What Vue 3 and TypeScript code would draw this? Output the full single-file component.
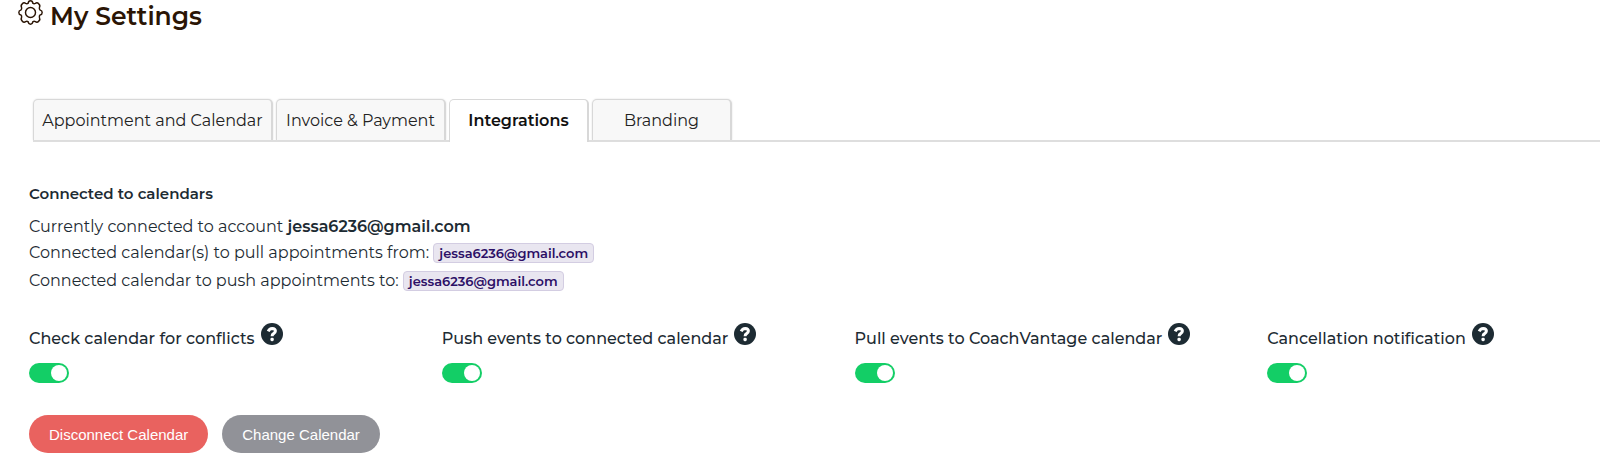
<script setup lang="ts">
import { ref } from 'vue'

interface Tab {
  label: string
  size: 'wide' | 'medium' | 'regular'
}

interface Option {
  id: string
  label: string
  enabled: boolean
}

const tabs: Tab[] = [
  { label: 'Appointment and Calendar', size: 'wide' },
  { label: 'Invoice & Payment', size: 'medium' },
  { label: 'Integrations', size: 'regular' },
  { label: 'Branding', size: 'regular' },
]
const activeTab = ref('Integrations')
const account = 'jessa6236@gmail.com'

const options = ref<Option[]>([
  { id: 'conflicts', label: 'Check calendar for conflicts', enabled: true },
  { id: 'push', label: 'Push events to connected calendar', enabled: true },
  { id: 'pull', label: 'Pull events to CoachVantage calendar', enabled: true },
  { id: 'cancellation', label: 'Cancellation notification', enabled: true },
])
</script>

<template>
  <main class="page">
    <header class="heading">
      <svg class="gear" viewBox="0 0 24 24" aria-hidden="true">
        <path d="M9.8 3.1 Q10 .8 12 .8 T14.2 3.1 Q15.4 3.9 16.7 3.2 Q18.4 2 19.9 3.7 Q21.6 5.2 20.6 7 Q20.1 8.8 21.3 9.7 Q23.2 10 23.2 12 T21.3 14.3 Q20.1 15.2 20.6 17 Q21.6 18.8 19.9 20.3 Q18.4 22 16.7 20.8 Q15.4 20.1 14.2 20.9 Q14 23.2 12 23.2 T9.8 20.9 Q8.6 20.1 7.3 20.8 Q5.6 22 4.1 20.3 Q2.4 18.8 3.4 17 Q3.9 15.2 2.7 14.3 Q.8 14 .8 12 T2.7 9.7 Q3.9 8.8 3.4 7 Q2.4 5.2 4.1 3.7 Q5.6 2 7.3 3.2 Q8.6 3.9 9.8 3.1 Z" />
        <circle cx="12" cy="12" r="4.8" />
      </svg>
      <h1>My Settings</h1>
    </header>

    <div class="tabs" role="tablist">
      <button
        v-for="tab in tabs"
        :key="tab.label"
        type="button"
        role="tab"
        class="tab"
        :class="[tab.size, { active: tab.label === activeTab }]"
        :aria-selected="tab.label === activeTab"
        @click="activeTab = tab.label"
      >{{ tab.label }}</button>
    </div>

    <section class="panel">
      <h2>Connected to calendars</h2>
      <p class="line first">Currently connected to account <strong>{{ account }}</strong></p>
      <p class="line">Connected calendar(s) to pull appointments from: <span class="tag">{{ account }}</span></p>
      <p class="line">Connected calendar to push appointments to: <span class="tag">{{ account }}</span></p>

      <div class="options">
        <div v-for="option in options" :key="option.id" class="option">
          <div class="caption">
            <label :for="option.id">{{ option.label }}</label>
            <button type="button" class="help" :aria-label="'Help: ' + option.label">
              <svg viewBox="0 0 22 22" aria-hidden="true">
                <circle cx="11" cy="11" r="11" />
                <path d="M7.2 8.4 Q8.4 5.5 11.2 5.5 Q14.4 5.7 14.4 8.1 Q14.4 9.6 12.6 10.6 Q11.1 11.4 11.1 13.2" />
                <rect x="9.4" y="14.8" width="3.4" height="3.4" rx="1.4" />
              </svg>
            </button>
          </div>
          <input :id="option.id" v-model="option.enabled" class="toggle" type="checkbox" role="switch" />
        </div>
      </div>

      <div class="actions">
        <button type="button" class="pill danger">Disconnect Calendar</button>
        <button type="button" class="pill neutral">Change Calendar</button>
      </div>
    </section>
  </main>
</template>

<style>
body {
  margin: 0;
  background: #fff;
}
</style>

<style scoped>
.page {
  font-family: Montserrat, Inter, "Liberation Sans", sans-serif;
  font-size: 16px;
  color: #1d2b33;
  overflow-x: hidden;
}
.heading {
  display: flex;
  align-items: flex-start;
  gap: 7px;
  height: 32px;
  padding-left: 18px;
  color: #2b1505;
}
.gear {
  width: 25px;
  height: 25px;
  fill: none;
  stroke: currentColor;
  stroke-width: 1.4;
}
h1 {
  margin: 0;
  font-size: 25px;
  font-weight: 600;
  line-height: 32px;
}
.tabs {
  display: flex;
  gap: 3px;
  height: 41px;
  margin: 67px 0 0 33px;
  border-bottom: 2px solid #dedede;
}
.tab {
  box-sizing: border-box;
  height: 41px;
  padding: 0;
  border: 1px solid #d8d8d8;
  border-right-width: 2px;
  border-bottom: 0;
  border-radius: 5px 5px 0 0;
  background: #f8f8f8;
  box-shadow: 0 0 2px #ddd;
  color: #222;
  font: inherit;
  white-space: nowrap;
}
.wide { width: 240px; }
.medium { width: 170px; }
.regular { width: 140px; }
.tab.active {
  height: 43px;
  padding-bottom: 2px;
  background: #fff;
  box-shadow: none;
  color: #111;
  font-weight: 600;
}
.panel {
  padding: 42px 0 17px 29px;
}
h2 {
  margin: 0;
  font-size: 15px;
  font-weight: 600;
  line-height: 20px;
}
.line {
  margin: 0;
  line-height: 28px;
}
.line.first {
  margin-top: 11px;
  line-height: 24px;
}
strong {
  font-weight: 600;
}
.tag {
  display: inline-block;
  box-sizing: border-box;
  height: 20px;
  padding: 0 5px;
  border: 1px solid #d3cde2;
  border-radius: 4px;
  background: #e9e6f0;
  color: #2c0f66;
  font-size: 13px;
  font-weight: 600;
  line-height: 18px;
}
.options {
  display: grid;
  grid-template-columns: repeat(4, 1fr);
  gap: 80px;
  margin-top: 28px;
}
.option {
  min-width: 0;
}
.caption {
  display: flex;
  gap: 6px;
  height: 26px;
  white-space: nowrap;
}
.caption label {
  padding-top: 6px;
  font-weight: 500;
  line-height: 20px;
}
.help {
  flex: none;
  width: 22px;
  height: 22px;
  padding: 0;
  border: 0;
  background: none;
}
.help svg {
  display: block;
  fill: #1d2b33;
}
.help path {
  fill: none;
  stroke: #fff;
  stroke-width: 3;
}
.help rect {
  fill: #fff;
}
.toggle {
  display: flex;
  align-items: center;
  box-sizing: border-box;
  width: 40px;
  height: 20px;
  margin: 14px 0 0;
  padding: 0 2px;
  border-radius: 10px;
  background: #b8bdc2;
  appearance: none;
}
.toggle::before {
  content: "";
  width: 16px;
  height: 16px;
  border-radius: 50%;
  background: #fff;
}
.toggle:checked {
  justify-content: flex-end;
  background: #13ce66;
}
.actions {
  display: flex;
  gap: 14px;
  margin-top: 32px;
}
.pill {
  height: 38px;
  padding: 0 20px;
  border: 0;
  border-radius: 19px;
  color: #fff;
  font-family: "Liberation Sans", Arial, sans-serif;
  font-size: 15px;
}
.danger { background: #e9625f; }
.neutral { background: #919298; }
</style>
